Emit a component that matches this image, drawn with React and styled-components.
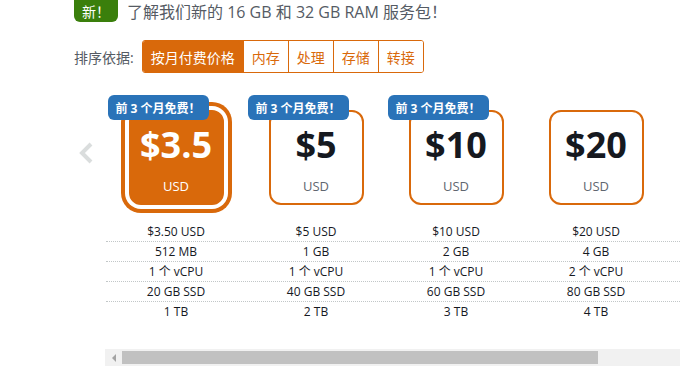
import React from "react";
import styled, { createGlobalStyle, css } from "styled-components";

const ORANGE = "#d9690b";

const GlobalStyle = createGlobalStyle`
  html, body {
    margin: 0;
    padding: 0;
    background: #fff;
  }
  * {
    box-sizing: border-box;
  }
`;

const Page = styled.div`
  width: 680px;
  height: 366px;
  overflow: hidden;
  font-family: "Open Sans", "Noto Sans CJK SC", sans-serif;
  color: #16191f;
`;

const Notice = styled.div`
  display: flex;
  align-items: center;
  gap: 9px;
  height: 22px;
  padding-left: 74px;
`;

const NewBadge = styled.span`
  display: flex;
  align-items: center;
  height: 22px;
  padding: 0 8px;
  background: #3a7f0c;
  color: #fff;
  font-size: 14px;
  border-radius: 0 0 6px 6px;
`;

const Headline = styled.span`
  font-size: 16px;
  color: #555b64;
  white-space: nowrap;
`;

const SortRow = styled.div`
  display: flex;
  align-items: center;
  gap: 8px;
  margin-top: 18px;
  padding-left: 74px;
`;

const SortLabel = styled.span`
  font-size: 14px;
  color: #555b64;
`;

const ButtonGroup = styled.div`
  display: flex;
  border: 1px solid ${ORANGE};
  border-radius: 3px;
  overflow: hidden;
`;

const SortButton = styled.button`
  height: 31px;
  padding: 0 8px;
  border: none;
  border-left: 1px solid ${ORANGE};
  background: #fff;
  color: ${ORANGE};
  font-family: inherit;
  font-size: 14px;
  &:first-child {
    border-left: none;
  }
  ${(p) =>
    p.$active &&
    css`
      background: ${ORANGE};
      color: #fff;
    `}
`;

const Plans = styled.div`
  display: flex;
  margin-top: 22px;
  padding-left: 78px;
`;

const ChevronCol = styled.div`
  width: 28px;
  flex: none;
  padding-top: 47px;
`;

const Scroller = styled.div`
  width: 700px;
  flex: none;
`;

const CardsRow = styled.div`
  display: grid;
  grid-template-columns: repeat(5, 140px);
`;

const CardCell = styled.div`
  display: flex;
  justify-content: center;
  padding-top: 15px;
`;

const Card = styled.div`
  position: relative;
  width: 95px;
  height: 95px;
  border: 2px solid ${ORANGE};
  border-radius: 12px;
  background: #fff;
  display: flex;
  flex-direction: column;
  align-items: center;
  ${(p) =>
    p.$selected &&
    css`
      background: ${ORANGE};
      box-shadow: 0 0 0 4px #fff, 0 0 0 8px ${ORANGE};
    `}
`;

const Promo = styled.span`
  position: absolute;
  left: -23px;
  top: -17px;
  height: 25px;
  padding: 0 8px;
  display: flex;
  align-items: center;
  background: #2a73b8;
  color: #fff;
  font-size: 12px;
  font-weight: 700;
  border-radius: 6px;
  white-space: nowrap;
  z-index: 1;
`;

const Price = styled.div`
  margin-top: 11px;
  font-size: 36px;
  font-weight: 700;
  line-height: 44px;
  color: ${(p) => (p.$selected ? "#fff" : "#16191f")};
`;

const Currency = styled.div`
  margin-top: 10px;
  font-size: 13px;
  line-height: 18px;
  color: ${(p) => (p.$selected ? "#fff" : "#5f6670")};
`;

const Table = styled.div`
  margin-top: 17px;
`;

const SpecRow = styled.div`
  display: grid;
  grid-template-columns: repeat(5, 140px);
  line-height: 19px;
  font-size: 12px;
  border-bottom: 1px dotted #c2c7c8;
  &:last-child {
    border-bottom: none;
  }
`;

const SpecCell = styled.div`
  text-align: center;
  white-space: nowrap;
`;

const ScrollTrack = styled.div`
  display: flex;
  align-items: center;
  height: 17px;
  margin-top: 28px;
  margin-left: -1px;
  background: #f1f1f1;
`;

const ScrollArrow = styled.div`
  width: 17px;
  height: 17px;
  display: flex;
  align-items: center;
  justify-content: center;
  &::before {
    content: "";
    border-right: 4px solid #a3a3a3;
    border-top: 4px solid transparent;
    border-bottom: 4px solid transparent;
  }
`;

const ScrollThumb = styled.div`
  width: 476px;
  height: 13px;
  background: #c1c1c1;
`;

const plans = [
  { price: "$3.5", monthly: "$3.50 USD", mem: "512 MB", cpu: "1 个 vCPU", ssd: "20 GB SSD", tb: "1 TB", promo: true, selected: true },
  { price: "$5", monthly: "$5 USD", mem: "1 GB", cpu: "1 个 vCPU", ssd: "40 GB SSD", tb: "2 TB", promo: true },
  { price: "$10", monthly: "$10 USD", mem: "2 GB", cpu: "1 个 vCPU", ssd: "60 GB SSD", tb: "3 TB", promo: true },
  { price: "$20", monthly: "$20 USD", mem: "4 GB", cpu: "2 个 vCPU", ssd: "80 GB SSD", tb: "4 TB" },
];

const specKeys = ["monthly", "mem", "cpu", "ssd", "tb"];
const sorts = ["按月付费价格", "内存", "处理", "存储", "转接"];

export default function App() {
  return (
    <Page>
      <GlobalStyle />
      <Notice>
        <NewBadge>新！</NewBadge>
        <Headline>了解我们新的 16 GB 和 32 GB RAM 服务包！</Headline>
      </Notice>
      <SortRow>
        <SortLabel>排序依据:</SortLabel>
        <ButtonGroup>
          {sorts.map((s, i) => (
            <SortButton key={s} $active={i === 0}>
              {s}
            </SortButton>
          ))}
        </ButtonGroup>
      </SortRow>
      <Plans>
        <ChevronCol>
          <svg width="16" height="22" viewBox="0 0 16 22">
            <path d="M13 2 L4 11 L13 20" fill="none" stroke="#dadddd" strokeWidth="4" />
          </svg>
        </ChevronCol>
        <Scroller>
          <CardsRow>
            {plans.map((p) => (
              <CardCell key={p.price}>
                <Card $selected={p.selected}>
                  {p.promo && <Promo>前 3 个月免费！</Promo>}
                  <Price $selected={p.selected}>{p.price}</Price>
                  <Currency $selected={p.selected}>USD</Currency>
                </Card>
              </CardCell>
            ))}
          </CardsRow>
          <Table>
            {specKeys.map((k) => (
              <SpecRow key={k}>
                {plans.map((p) => (
                  <SpecCell key={p.price}>{p[k]}</SpecCell>
                ))}
              </SpecRow>
            ))}
          </Table>
          <ScrollTrack>
            <ScrollArrow />
            <ScrollThumb />
          </ScrollTrack>
        </Scroller>
      </Plans>
    </Page>
  );
}
